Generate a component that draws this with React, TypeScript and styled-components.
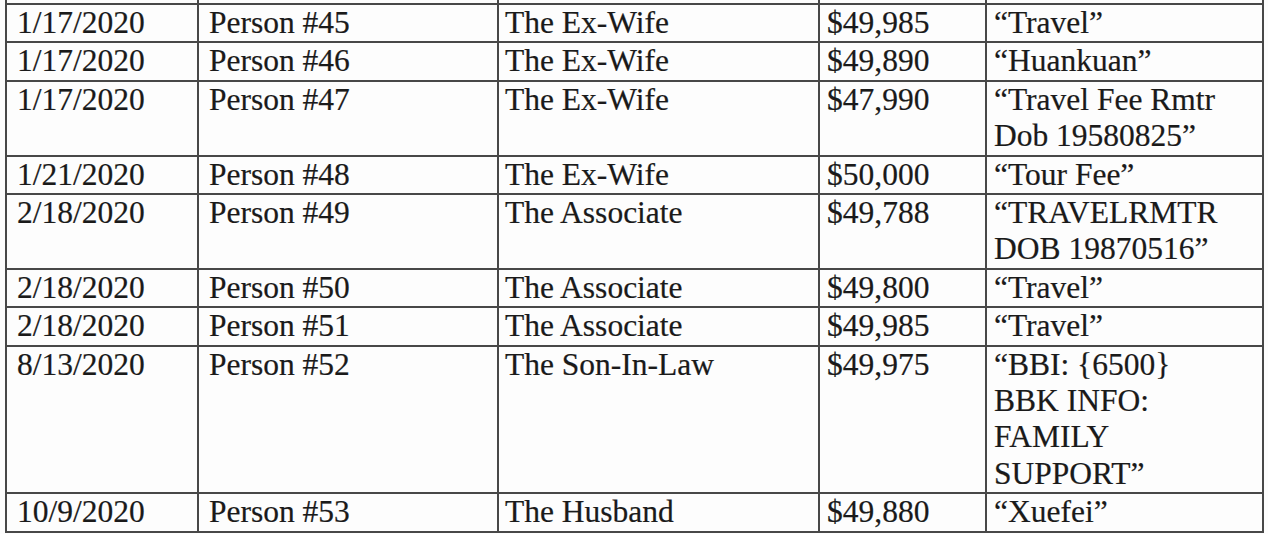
import React from "react";
import styled, { createGlobalStyle } from "styled-components";

const GlobalStyle = createGlobalStyle`
  html, body {
    margin: 0;
    padding: 0;
    background: #ffffff;
  }
`;

// the scan is cropped, so the page clips the row above the first one
const Page = styled.div`
  width: 1268px;
  height: 534px;
  overflow: hidden;
  background: #fdfdfd;
`;

const Sheet = styled.table`
  border-collapse: collapse;
  table-layout: fixed;
  margin: -34px 0 0 5px;
  font-family: "Liberation Serif", "Times New Roman", serif;
  font-size: 31.5px;
  line-height: 36.4px;
  color: #1a1a1a;
  -webkit-text-stroke: 0.2px #1a1a1a;
`;

const Row = styled.tr<{ clipped?: boolean }>`
  height: ${props => (props.clipped ? "37px" : "auto")};
`;

const Cell = styled.td<{ pad: number }>`
  border: 2px solid #484848;
  padding: 0 0 0 ${props => props.pad}px;
  vertical-align: top;
  white-space: nowrap;
  overflow: hidden;
`;

const columns = [
  { width: 192, pad: 10 },
  { width: 300, pad: 10 },
  { width: 321, pad: 6 },
  { width: 167, pad: 7 },
  { width: 277, pad: 7 }
];

interface Transfer {
  date: string;
  person: string;
  relation: string;
  amount: string;
  memo: string[];
}

const transfers: Transfer[] = [
  { date: "1/17/2020", person: "Person #45", relation: "The Ex-Wife", amount: "$49,985", memo: ["“Travel”"] },
  { date: "1/17/2020", person: "Person #46", relation: "The Ex-Wife", amount: "$49,890", memo: ["“Huankuan”"] },
  { date: "1/17/2020", person: "Person #47", relation: "The Ex-Wife", amount: "$47,990", memo: ["“Travel Fee Rmtr", "Dob 19580825”"] },
  { date: "1/21/2020", person: "Person #48", relation: "The Ex-Wife", amount: "$50,000", memo: ["“Tour Fee”"] },
  { date: "2/18/2020", person: "Person #49", relation: "The Associate", amount: "$49,788", memo: ["“TRAVELRMTR", "DOB 19870516”"] },
  { date: "2/18/2020", person: "Person #50", relation: "The Associate", amount: "$49,800", memo: ["“Travel”"] },
  { date: "2/18/2020", person: "Person #51", relation: "The Associate", amount: "$49,985", memo: ["“Travel”"] },
  { date: "8/13/2020", person: "Person #52", relation: "The Son-In-Law", amount: "$49,975", memo: ["“BBI: {6500}", "BBK INFO:", "FAMILY", "SUPPORT”"] },
  { date: "10/9/2020", person: "Person #53", relation: "The Husband", amount: "$49,880", memo: ["“Xuefei”"] }
];

const Memo: React.FC<{ lines: string[] }> = ({ lines }) => (
  <>
    {lines.map((line, i) => (
      <React.Fragment key={line}>
        {i > 0 && <br />}
        {line}
      </React.Fragment>
    ))}
  </>
);

export default function App() {
  return (
    <>
      <GlobalStyle />
      <Page>
        <Sheet>
          <colgroup>
            {columns.map((c, i) => (
              <col key={i} style={{ width: c.width }} />
            ))}
          </colgroup>
          <tbody>
            <Row clipped>
              {columns.map((c, i) => (
                <Cell key={i} pad={c.pad} />
              ))}
            </Row>
            {transfers.map(t => (
              <Row key={t.person}>
                <Cell pad={columns[0].pad}>{t.date}</Cell>
                <Cell pad={columns[1].pad}>{t.person}</Cell>
                <Cell pad={columns[2].pad}>{t.relation}</Cell>
                <Cell pad={columns[3].pad}>{t.amount}</Cell>
                <Cell pad={columns[4].pad}>
                  <Memo lines={t.memo} />
                </Cell>
              </Row>
            ))}
          </tbody>
        </Sheet>
      </Page>
    </>
  );
}
